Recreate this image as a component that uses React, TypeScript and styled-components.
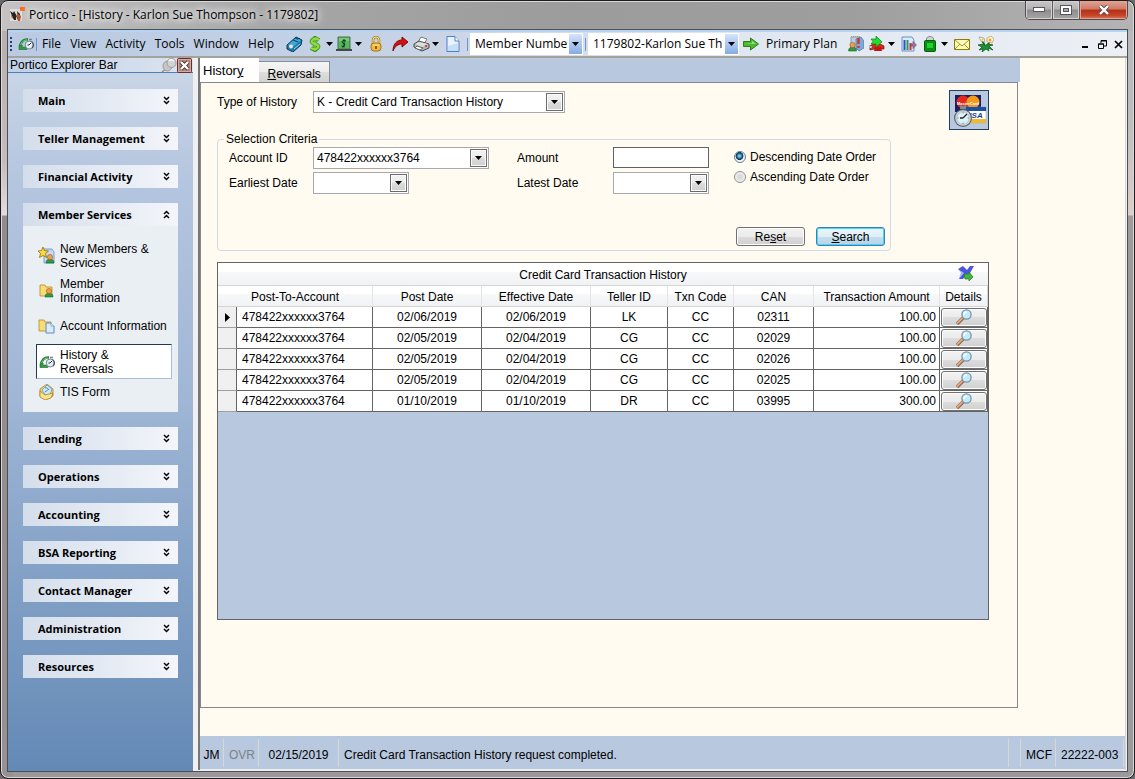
import React from "react";
import styled, { createGlobalStyle, css } from "styled-components";

const sans = '"Liberation Sans", Arial, sans-serif';
const ui = '"Open Sans", "Noto Sans", sans-serif';
const blue = "#b8c8df";
const cream = "#fffbf0";

const GlobalStyle = createGlobalStyle`
  *, *::before, *::after { box-sizing: border-box; }
  body { margin: 0; background: #6d6a6d; font: 12px/14px ${sans}; color: #000; }
  button, input, select { font: inherit; color: inherit; margin: 0; padding: 0; }
  button { border: 0; background: none; }
  svg { display: block; }
`;

/* ---------- window frame ---------- */
const Window = styled.div`
  display: flex;
  flex-direction: column;
  min-height: 100vh;
  padding: 0 6px 6px;
  border: 1px solid #1e1a1e;
  border-radius: 8px;
  box-shadow: inset 0 0 0 1px #d9d9d9;
  background:
    linear-gradient(90deg, #c4c2c2, #a6a6a6 280px, #9c9c9c 50%, #9e9e9e 75%, #b4b4b4) top / 100% 30px no-repeat,
    linear-gradient(#b5abad, #c4bcbc 160px, #e4dcdc 214px, #928a8d 215px, #989093) left / 12px 100% no-repeat,
    linear-gradient(#b8b8b8, #bcbcbc 110px, #dccfc8 214px, #a09a9a 215px, #9a9a9a) right / 12px 100% no-repeat,
    #9c979a;
`;
const TitleBar = styled.header`
  display: flex;
  align-items: flex-start;
  height: 28px;
  padding-left: 2px;
`;
const Title = styled.h1`
  display: flex;
  flex: 1;
  align-items: center;
  gap: 4px;
  height: 28px;
  margin: 0;
  font: 12px/16px ${ui};
  text-shadow: 0 0 6px #fff, 0 0 10px #eee, 0 0 12px #ddd;
`;
const WindowButtons = styled.div`
  display: flex;
  height: 19px;
  border: 1px solid #4f4a4d;
  border-top: 0;
  border-radius: 0 0 5px 5px;
  overflow: hidden;
`;
const WindowButton = styled.button<{ $close?: boolean }>`
  display: grid;
  place-items: center;
  width: ${(p) => (p.$close ? 47 : 27)}px;
  border-right: ${(p) => (p.$close ? "0" : "1px solid #625d60")};
  box-shadow: inset 0 0 0 1px ${(p) => (p.$close ? "#e2a595" : "#d2d0d0")};
  background: ${(p) =>
    p.$close
      ? "linear-gradient(#dfa493, #cf7a66 45%, #b52f17 50%, #c4442a 80%, #e07a55)"
      : "linear-gradient(#c8c8c8, #b2b2b2 45%, #8e8c8d 50%, #a8a5a6)"};
`;
const Client = styled.div`
  display: flex;
  flex: 1;
  flex-direction: column;
  border: 1px solid #4c4f56;
  background: #f0f0f0;
`;

/* ---------- tool bar ---------- */
const Toolbar = styled.div`
  display: flex;
  align-items: center;
  height: 28px;
  padding: 0 2px;
  border-top: 2px solid #b5d4f1;
  border-bottom: 2px solid #a3a29b;
  background: linear-gradient(90deg, #b9cae2, #c6d3e6 35%, #dfe6f0 62%, #ecf0f5);
  font: 12px/16px ${ui};
`;
const Grip = styled.i`
  width: 2px;
  height: 15px;
  margin-right: 6px;
  background: repeating-linear-gradient(#27406f 0 2px, transparent 2px 4px);
`;
const Divider = styled.i`
  width: 1px;
  height: 13px;
  margin: 0 2px;
  background: #6f94c9;
`;
const MenuBar = styled.nav`
  display: flex;
  flex: none;
  justify-content: space-between;
  width: 232px;
  margin: 0 8px 0 3px;
`;
const ToolButton = styled.button`
  display: grid;
  flex: none;
  place-items: center;
  width: 24px;
  height: 22px;
`;
const SplitButton = styled.button`
  display: grid;
  flex: none;
  grid-template-columns: 18px 11px;
  place-items: center;
  height: 22px;
`;
const TextButton = styled.button`
  flex: none;
  width: 81px;
  padding-left: 3px;
  text-align: left;
`;
const MdiButtons = styled.div`
  display: flex;
  gap: 2px;
  margin-left: auto;
`;
const MdiButton = styled.button`
  display: grid;
  place-items: center;
  width: 14px;
  height: 14px;
`;

/* ---------- drop-downs ---------- */
const SelectBox = styled.span<{ $w: number; $tool?: boolean }>`
  position: relative;
  display: block;
  flex: none;
  width: ${(p) => p.$w}px;
  height: 22px;
  border: 1px solid ${(p) => (p.$tool ? "#fff" : "#a8a8ad")};
  background: #fff;
  select {
    width: 100%;
    height: 20px;
    padding: 0 ${(p) => (p.$tool ? 14 : 20)}px 0 ${(p) => (p.$tool ? 4 : 3)}px;
    border: 0;
    border-radius: 0;
    outline: 0;
    appearance: none;
    background: transparent;
  }
  svg {
    position: absolute;
    top: ${(p) => (p.$tool ? 0 : 1)}px;
    right: ${(p) => (p.$tool ? 0 : 1)}px;
    width: ${(p) => (p.$tool ? 13 : 17)}px;
    height: ${(p) => (p.$tool ? 20 : 18)}px;
    pointer-events: none;
    ${(p) =>
      p.$tool
        ? css`background: linear-gradient(#d5e4fa, #86abe4);`
        : css`
            border: 1px solid #6c6c6c;
            box-shadow: inset 0 0 0 1px #fbfbfb;
            background: linear-gradient(#f2f2f2, #ebebeb 50%, #dddddd 50%, #cfcfcf);
          `}
  }
`;

/* ---------- body ---------- */
const Body = styled.div`
  display: flex;
  flex: 1;
`;
const Sidebar = styled.aside`
  display: flex;
  flex: none;
  flex-direction: column;
  width: 185px;
`;
const SidebarTitle = styled.div`
  display: flex;
  align-items: center;
  height: 15px;
  padding: 0 1px 0 2px;
  border-bottom: 1px solid #4d7fb5;
  background: linear-gradient(90deg, #bfd0e7, #dce4f0);
  h2 { flex: 1; margin: 0; font: inherit; }
`;
const SmallButton = styled.button`
  flex: none;
`;
const Groups = styled.div`
  display: flex;
  flex: 1;
  flex-direction: column;
  gap: 15px;
  padding: 16px 15px;
  background: linear-gradient(#c8d5e6, #b4c5df 110px, #9fb6d5 330px, #6389b5);
`;
const GroupHeader = styled.button`
  display: flex;
  align-items: center;
  justify-content: space-between;
  width: 100%;
  height: 23px;
  padding: 0 8px 0 15px;
  background: linear-gradient(90deg, #d4deeb, #f3f5fa);
  font: bold 11px/14px ${ui};
`;
const GroupBody = styled.div`
  padding: 12px 6px 7px 13px;
  background: #eaeff4;
`;
const GroupItem = styled.a<{ $active?: boolean }>`
  display: flex;
  align-items: center;
  gap: 5px;
  min-height: 35px;
  margin-top: ${(p) => (p.$active ? 1 : 0)}px;
  padding-left: ${(p) => (p.$active ? 2 : 1)}px;
  border: 1px solid transparent;
  color: #000;
  text-decoration: none;
  white-space: pre-line;
  svg { flex: none; }
  &:last-child { min-height: 26px; }
  ${(p) =>
    p.$active &&
    css`
      border-color: #1f3a55 #a9bdd9 #a9bdd9 #1f3a55;
      background: #fff;
    `}
`;
const Main = styled.main`
  display: flex;
  flex: 1;
  flex-direction: column;
  min-width: 0;
  margin: 0 1px 1px 5px;
  border: solid #777;
  border-width: 0 1px 0 2px;
  border-right-color: #d8d8d8;
  background: ${cream};
`;
const Tabs = styled.div`
  display: flex;
  align-items: flex-end;
  height: 24px;
  margin-right: 105px;
  background: ${blue};
`;
const Tab = styled.button<{ $active?: boolean }>`
  height: ${(p) => (p.$active ? 24 : 21)}px;
  padding: ${(p) => (p.$active ? "2px 16px 0 3px" : "4px 8px 0")};
  border: 1px solid #8b8d92;
  border-width: ${(p) => (p.$active ? "0" : "1px 1px 0 0")};
  background: ${(p) => (p.$active ? "#fff" : "linear-gradient(#f4f4f4, #ececec 50%, #dedede 50%, #d2d2d2)")};
  font-size: ${(p) => (p.$active ? 13 : 12)}px;
  line-height: 14px;
`;
const Page = styled.section`
  flex: 1;
  margin: 0 107px 28px 0;
  padding: 7px 16px;
  border: 1px solid #85878d;
`;
const Content = styled.div`
  max-width: 772px;
`;
const HistoryRow = styled.div`
  display: flex;
  align-items: flex-start;
  label { width: 96px; padding-top: 5px; }
  ${SelectBox} { margin-top: 1px; }
`;
const CardButton = styled.button`
  width: 40px;
  height: 40px;
  margin-left: auto;
  border: 1px solid #24405f;
  background: ${blue};
`;
const Criteria = styled.fieldset`
  width: 674px;
  max-width: 100%;
  height: 119px;
  margin: 2px 0 0;
  padding: 1px 5px 4px 11px;
  border: 1px solid #d0dbe6;
  border-radius: 4px;
  legend { margin-left: -5px; padding: 0 2px; }
`;
const CriteriaRow = styled.div`
  display: flex;
`;
const Fields = styled.div`
  display: grid;
  grid-template-columns: 84px 204px 96px 121px;
  row-gap: 3px;
  align-items: center;
`;
const AmountInput = styled.input`
  align-self: start;
  width: 96px;
  height: 21px;
  padding: 0 3px;
  border: 1px solid #5e6266;
  background: #fff;
`;
const Radios = styled.div`
  display: flex;
  flex-direction: column;
  label { display: flex; align-items: center; gap: 4px; height: 20px; white-space: nowrap; }
  input {
    width: 12px;
    height: 12px;
    border: 1px solid #8e8f8f;
    border-radius: 50%;
    appearance: none;
    background: radial-gradient(#dadada 30%, #f4f4f4 70%);
  }
  input:checked {
    border-color: #5c7f96;
    background: radial-gradient(circle at 45% 40%, #7cc8ee 10%, #16577f 35%, #0b3350 45%, #f4f4f4 52%);
  }
`;
const Actions = styled.div`
  display: flex;
  justify-content: flex-end;
  gap: 11px;
  margin-top: 33px;
`;
const Button = styled.button<{ $primary?: boolean }>`
  width: 69px;
  height: 19px;
  padding-top: 1px;
  border: 1px solid ${(p) => (p.$primary ? "#3c7fb1" : "#707070")};
  border-radius: 3px;
  box-shadow: inset 0 0 0 1px ${(p) => (p.$primary ? "#45d8fb" : "#fcfcfc")};
  background: ${(p) =>
    p.$primary
      ? "linear-gradient(#eef6fb, #ddeef7 50%, #c6dfed 50%, #b5d3e6)"
      : "linear-gradient(#f2f2f2, #ebebeb 50%, #dddddd 50%, #cfcfcf)"};
`;

/* ---------- data grid ---------- */
const headFill = "linear-gradient(#fff 42%, #f7f8fa 42%, #f1f2f4)";
const DataGrid = styled.div`
  min-height: 358px;
  margin-top: 11px;
  border: 1px solid #646464;
  background: ${blue};
`;
const GridCaption = styled.div`
  position: relative;
  height: 23px;
  padding-top: 5px;
  border-bottom: 1px solid #d5d5d5;
  background: ${headFill};
  text-align: center;
  h2 { margin: 0; font: inherit; }
  button { position: absolute; top: 2px; right: 13px; }
`;
const Table = styled.table`
  width: 100%;
  border-spacing: 0;
  table-layout: fixed;
  th, td {
    height: 21px;
    padding: 0 3px;
    border: solid #646464;
    border-width: 0 1px 1px 0;
    background: #fff;
    font-weight: normal;
    text-align: center;
    white-space: nowrap;
  }
  th { padding: 2px 0 0; border-color: #d5d5d5; background: ${headFill}; }
  th:not(:last-child) { border-right-color: #e4e5e6; }
  td:nth-child(1) { padding: 0; background: #f0f0f0; border-bottom-color: #a0a0a0; }
  td:nth-child(2) { padding-left: 5px; text-align: left; }
  td:nth-child(8) { text-align: right; }
  td:nth-child(9) { padding: 0; }
`;
const Col = styled.col<{ $w: number }>`
  width: ${(p) => p.$w}px;
`;
const DetailButton = styled.button`
  display: grid;
  place-items: center;
  width: 46px;
  height: 19px;
  margin: 0 auto 0 1px;
  border: 1px solid #707070;
  border-radius: 3px;
  box-shadow: inset 0 0 0 1px #fcfcfc;
  background: linear-gradient(#f2f2f2, #ebebeb 50%, #dddddd 50%, #cfcfcf);
`;
const Marker = styled.svg`
  margin: 0 auto;
`;

/* ---------- status bar ---------- */
const StatusBar = styled.footer`
  display: flex;
  height: 34px;
  padding: 3px 1px 2px 0;
  border-bottom: 1px solid #e8ecf2;
  background: ${blue};
`;
const StatusCell = styled.span<{ $w?: number; $muted?: boolean; $center?: boolean }>`
  display: flex;
  flex: ${(p) => (p.$w ? "none" : "1")};
  align-items: center;
  justify-content: ${(p) => (p.$center ? "center" : "flex-start")};
  width: ${(p) => (p.$w ? p.$w + "px" : "auto")};
  padding: ${(p) => (p.$center ? "4px 0 0" : "4px 0 0 5px")};
  border-right: 1px solid #d8d8d4;
  color: ${(p) => (p.$muted ? "#7e8287" : "#000")};
  white-space: nowrap;
`;

/* ---------- icons ---------- */
const Svg = ({ w = 16, h = 16, children }: { w?: number; h?: number; children: React.ReactNode }) => (
  <svg width={w} height={h} viewBox={`0 0 ${w} ${h}`} aria-hidden="true">{children}</svg>
);
const Down = () => (
  <Svg w={7} h={4}><path d="M0 0h7L3.500 4z" fill="#000" /></Svg>
);
const AppIcon = () => (
  <Svg>
    <path d="M1 2h12v12H1z" fill="#dcdcdc" />
    <path d="M1 4l3 2 1-2 4 7-1-7 3 3v6H9L7 9v4H5L3 9z" fill="#2b211e" />
    <path d="M8 6l4 3-1 5H9zM2 8l2 2-1 2z" fill="#b3542b" />
    <path d="M11 0h5v4h-5z" fill="#ff6a1a" />
  </Svg>
);
const HistoryIcon = () => (
  <Svg>
    <path d="M2 9.500C3.500 5 6 3 10 3.500" fill="none" stroke="#1f8434" strokeWidth="2.600" />
    <path d="M2.500 9C4 5.500 6 3.800 9 4" fill="none" stroke="#7ccf7c" />
    <path d="M1 9.500h3.500L3.500 11H9v2.500H1z" fill="#2f9d3f" stroke="#1a6b2b" strokeWidth=".6" />
    <circle cx="11.200" cy="9" r="4" fill="#e6edf3" stroke="#76838f" />
    <path d="M13.500 5.500a4 4 0 0 1 .5 6.500" fill="none" stroke="#4c5863" strokeWidth="1.200" />
    <path d="M11 9l2-2M11 9H9.500" stroke="#27394c" fill="none" />
    <path d="M11 3.500h3" stroke="#76838f" strokeWidth="1.500" />
  </Svg>
);
const TagIcon = () => (
  <Svg w={17}>
    <path d="M1 9L10 1l6 3-1 5-8 7-6-3z" fill="#1d7cab" stroke="#0c3d5c" />
    <path d="M2 9l8-7 5 2-8 7z" fill="#3fa9d6" />
    <path d="M9 1.500l2 1.500 3-.5M7 4l5 2" stroke="#0c3d5c" fill="none" />
    <circle cx="5" cy="10.500" r="2" fill="#f3dff0" />
    <path d="M8 13l6-5" stroke="#8fdcf5" />
  </Svg>
);
const DollarIcon = () => (
  <Svg w={12}>
    <path d="M10 4Q6 1.500 3.500 4T6 8t2.500 4T2 12" fill="none" stroke="#3c8f1c" strokeWidth="4" />
    <path d="M6 0v16" stroke="#3c8f1c" strokeWidth="3" />
    <path d="M6 1v14" stroke="#9be24a" />
    <path d="M10 4Q6 1.500 3.500 4T6 8t2.500 4T2 12" fill="none" stroke="#8edc40" strokeWidth="2.400" />
  </Svg>
);
const CashIcon = () => (
  <Svg>
    <path d="M2 1h12v12H2z" fill="#58b860" stroke="#4f6b54" />
    <path d="M0 13h16v2H0z" fill="#3e4a43" />
    <path d="M3 2h10v3H3z" fill="#74c97a" />
    <path d="M10 5Q6 3.500 6 5.500T8 7.500t0 2.500T6 9.500M8 3v8.500" stroke="#0b3414" fill="none" />
  </Svg>
);
const LockIcon = () => (
  <Svg w={12}>
    <path d="M3 8V4a3 3 0 0 1 6 0v4" fill="none" stroke="#a98024" strokeWidth="2.500" />
    <path d="M3 8V4a3 3 0 0 1 6 0v4" fill="none" stroke="#ffe08a" />
    <rect x="1" y="7" width="10" height="8" rx="3" fill="#f3b93c" stroke="#a87416" />
    <path d="M3 9h6" stroke="#ffe79c" />
    <path d="M6 10v3" stroke="#6a4408" strokeWidth="1.500" />
  </Svg>
);
const RedoIcon = () => (
  <Svg><path d="M1 15C1 8 5 4 10 4V1l6 5-6 5V8C6 8 3 10 1 15z" fill="#d90f0f" stroke="#7d0808" /></Svg>
);
const PrinterIcon = () => (
  <Svg w={17}>
    <path d="M8 1l6 2-3 5-6-2z" fill="#fff" stroke="#777" />
    <path d="M1 8l5-3 10 3v4l-7 3-8-4z" fill="#b4b4b4" stroke="#4b4b4b" />
    <path d="M2 8l4-2 9 2-6 3z" fill="#dedede" />
    <path d="M4 10l6 2-3 2-5-2z" fill="#fff" stroke="#666" />
    <circle cx="13" cy="10" r="1" fill="#d22" />
  </Svg>
);
const DocIcon = () => (
  <Svg w={14}>
    <path d="M1 .5h8L13 5v10.500H1z" fill="#e8f3ff" stroke="#4e7fc4" />
    <path d="M2 10l10-3v8H2z" fill="#c6def8" />
    <path d="M9 .5V5h4" fill="#fff" stroke="#4e7fc4" />
  </Svg>
);
const GoIcon = () => (
  <Svg><path d="M.5 5.500h7V2l8 6-8 6v-3.500h-7z" fill="#4cba2e" stroke="#2c7f1c" /><path d="M2 7h7V5l4 3z" fill="#a5e884" /></Svg>
);
const Person = ({ x, y }: { x: number; y: number }) => (
  <g transform={`translate(${x} ${y})`}>
    <path d="M0 9c0-3 2-4 4-4s4 1 4 4z" fill="#2f9a3c" stroke="#17652a" strokeWidth=".6" />
    <circle cx="4" cy="3" r="2.600" fill="#f0a04c" stroke="#9a5a1e" strokeWidth=".6" />
  </g>
);
const PeopleIcon = () => (
  <Svg>
    <path d="M3 1h9v12H3z" fill="#b9cfe9" stroke="#7f9cc2" />
    <path d="M3 .5h9" stroke="#c9a13d" strokeDasharray="1 1" />
    <path d="M8 3l5-2 3 4v7l-5 3-3-3z" fill="#7fa8d9" stroke="#3d6da6" strokeWidth=".6" />
    <path d="M10.500 2v6M10.500 10v2" stroke="#d8342a" strokeWidth="2.400" />
    <Person x={0.5} y={6} />
  </Svg>
);
const PhoneIcon = () => (
  <Svg>
    <path d="M1 10c3-3 10-3 14 0v3H5l-4 1z" fill="#e4221b" stroke="#7d0e0a" strokeWidth=".7" />
    <path d="M6 11h6l1 4H5z" fill="#c41410" />
    <path d="M0 10h3v2H0zM2 13h3" fill="#fff" stroke="#666" strokeWidth=".6" />
    <path d="M2 3h5V0l6 6-6 5V8H2L4 5.500z" fill="#22dd2c" stroke="#128018" strokeWidth=".7" />
  </Svg>
);
const ChartIcon = () => (
  <Svg>
    <path d="M1 1h10l2 3v11H1z" fill="#dbe9fa" stroke="#6c8fc4" />
    <path d="M2.500 4h2v10h-2z" fill="#2a52c8" /><path d="M5.500 4h2v10h-2z" fill="#2b9b4a" /><path d="M8.500 7h2v7h-2z" fill="#cf3030" />
    <path d="M10 8h2V5.500L15.500 9 12 12.500V10h-2z" fill="#b5707f" stroke="#4d4b8a" strokeWidth=".6" />
  </Svg>
);
const BagIcon = () => (
  <Svg w={12}>
    <path d="M2.500 5V2L5 .5h2L9.500 2v3z" fill="#cfd3d0" stroke="#8c938e" />
    <rect x=".5" y="4.500" width="11" height="11" rx="1" fill="#0a8f14" stroke="#07600d" />
    <path d="M3 7h6v5H3z" fill="#1fd22c" />
  </Svg>
);
const MailIcon = () => (
  <Svg>
    <path d="M.5 3.500h15v10H.5z" fill="#fffbc0" stroke="#8a7d00" />
    <path d="M1 4l7 6 7-6M1 13l5-5M15 13l-5-5" fill="none" stroke="#a89a14" />
  </Svg>
);
const FlowerIcon = () => (
  <Svg>
    <path d="M4 5l3 4M12 6l-4 4" stroke="#11611f" strokeWidth="1.500" />
    <path d="M0 9l5-1 2 2 3-2 5 1-4 1 4 4-5-2 1 3-3-2-4 3 1-3-4 1 3-3z" fill="#1f9131" stroke="#11611f" strokeWidth=".8" />
    <path d="M1 1l5 1 1 4-4-1z" fill="#fff6e2" stroke="#8f9a7a" strokeWidth=".7" />
    <path d="M9 2l4-2 3 3-2 4-5-1z" fill="#fff1d0" stroke="#a88b4c" strokeWidth=".6" />
    <circle cx="12" cy="4" r="1.500" fill="#f3a033" /><circle cx="4.500" cy="3.500" r="1" fill="#f2bd32" />
  </Svg>
);
const PinIcon = () => (
  <Svg>
    <path d="M1 15l5-4" stroke="#8b8b8b" strokeWidth="1.500" />
    <ellipse cx="6.500" cy="9" rx="4.500" ry="5" fill="#c6c6c6" stroke="#9d9d9d" />
    <circle cx="10.500" cy="6" r="4.500" fill="#d2d2d2" stroke="#9d9d9d" />
    <path d="M8 4c2-2 4-1 5 0" stroke="#fff" fill="none" strokeWidth="1.500" />
  </Svg>
);
const CloseIcon = () => (
  <Svg w={15} h={15}>
    <rect x=".5" y=".5" width="14" height="14" rx="1" fill="#ad8781" stroke="#702d28" />
    <path d="M1.500 1.500h12v12h-12z" fill="none" stroke="#d2aaa4" />
    <path d="M4 4l7 7M11 4l-7 7" stroke="#4a3432" strokeWidth="4" />
    <path d="M4 4l7 7M11 4l-7 7" stroke="#fff" strokeWidth="2.400" />
  </Svg>
);
const Chevrons = ({ up }: { up?: boolean }) => (
  <Svg w={7} h={9}>
    <path d={up ? "M1 4l2.500-2.500L6 4M1 8l2.500-2.500L6 8" : "M1 1l2.500 2.500L6 1M1 5l2.500 2.500L6 5"} fill="none" stroke="#000" strokeWidth="1.500" />
  </Svg>
);
const Folder = () => (
  <path d="M1 2h5l1 2h6v9H1z" fill="#f8dc76" stroke="#b58a1e" strokeWidth=".8" />
);
const NewMemberIcon = () => (
  <Svg w={17} h={17}>
    <path d="M6 2h8l2 3v11H6z" fill="#c4daf4" stroke="#7d9fcb" />
    <g transform="translate(1 0)"><Person x={7} y={7} /></g>
    <path d="M5 0l1.500 3.500 4 .5-3 2.500 1 4L5 8.500 1.500 10.500l1-4-2.500-2.500 3.500-.5z" fill="#ffd83c" stroke="#8c6a10" strokeWidth=".8" />
  </Svg>
);
const MemberInfoIcon = () => (
  <Svg w={17}><g transform="translate(1 0)"><Folder /></g><Person x={7} y={5} /></Svg>
);
const AccountIcon = () => (
  <Svg w={17}><Folder /><path d="M8 5h5l3 3v7H8z" fill="#d9ebfd" stroke="#5b8ac6" /><path d="M13 5v3h3" fill="#fff" stroke="#5b8ac6" strokeWidth=".7" /></Svg>
);
const TisIcon = () => (
  <Svg w={17}>
    <path d="M2 5l7-5 6 5v7l-6 3-7-3z" fill="#f6d870" stroke="#a98020" strokeWidth=".8" />
    <path d="M4 6l5-5 5 4-2 6-4 1z" fill="#cfe8fa" stroke="#6d93bf" strokeWidth=".8" />
    <path d="M7 4c2-1 3 1 4 2M7 8l4-3" stroke="#3f8fc8" fill="none" />
    <path d="M2 7l5 4 8-2-2 5-6 2-5-3z" fill="#fbe48c" stroke="#a98020" strokeWidth=".8" />
  </Svg>
);
const CardIcon = () => (
  <Svg w={38} h={38}>
    <rect x="5" y="4" width="26" height="17" fill="#1b1d5c" />
    <circle cx="13" cy="11" r="6.500" fill="#e3281c" />
    <circle cx="23" cy="11" r="6.500" fill="#f39a1c" />
    <text x="7" y="14" fontSize="4" fontWeight="bold" fill="#fff" fontFamily="Liberation Sans, sans-serif">MasterCard</text>
    <rect x="12" y="16" width="24" height="16" fill="#fff" stroke="#9aa" strokeWidth=".5" />
    <path d="M12 16h24v4H12z" fill="#1d4f9e" /><path d="M12 28h24v4H12z" fill="#f2b82e" />
    <text x="14" y="27" fontSize="8" fontWeight="bold" fontStyle="italic" fill="#1d3f8e" fontFamily="Liberation Sans, sans-serif">VISA</text>
    <path d="M10 14l3 1 3-1v4h-6z" fill="#888" />
    <circle cx="13" cy="27" r="9" fill="#59646f" />
    <circle cx="13" cy="27" r="7.800" fill="#d5dce2" />
    <circle cx="13" cy="27" r="6.300" fill="#d9f3fc" stroke="#8fa3b0" strokeWidth=".6" />
    <path d="M13 27l4-4M13 27h-3" stroke="#222" strokeWidth="1.300" />
    <path d="M13 21v1.500M13 31.500V33M7 27h1.500M17.500 27H19" stroke="#e07b3a" />
  </Svg>
);
const ExportIcon = () => (
  <Svg w={18}>
    <path d="M1 4l5-3 4 4 3-4h4l-4 7-4 2-3 4H2l3-6z" fill="#4b55e0" />
    <path d="M1 4l3 3-2 7 5-6z" fill="#a9b3f3" />
    <path d="M7 9h5V7l4 5-4 4v-2H8z" fill="#3fb53a" stroke="#1d7d22" strokeWidth=".7" />
  </Svg>
);
const LensIcon = () => (
  <Svg w={16} h={16}>
    <path d="M1 15l6-6" stroke="#7b6a66" strokeWidth="3.500" />
    <path d="M1 14.500l5.500-5.500" stroke="#f2a46a" strokeWidth="1.800" />
    <circle cx="10.500" cy="5.500" r="4.600" fill="#c3ebfb" stroke="#7792ab" strokeWidth="1.300" />
    <path d="M8 6c0-2 1-3 3-3" stroke="#fff" strokeWidth="1.500" fill="none" />
  </Svg>
);

/* ---------- parts ---------- */
type DropProps = { id: string; w: number; value?: string; tool?: boolean; label?: string };
const Drop = ({ id, w, value = "", tool, label }: DropProps) => (
  <SelectBox $w={w} $tool={tool}>
    <select id={id} aria-label={label}><option>{value}</option></select>
    <svg viewBox={tool ? "0 0 13 20" : "0 0 15 16"} aria-hidden="true">
      <path d={tool ? "M3 8h7l-3.500 4z" : "M4 6h7l-3.500 4z"} fill="#000" />
    </svg>
  </SelectBox>
);

const menus = ["File", "View", "Activity", "Tools", "Window", "Help"];
const services = [
  { text: "New Members &\nServices", icon: <NewMemberIcon /> },
  { text: "Member\nInformation", icon: <MemberInfoIcon /> },
  { text: "Account Information", icon: <AccountIcon /> },
  { text: "History &\nReversals", icon: <HistoryIcon />, active: true },
  { text: "TIS Form", icon: <TisIcon /> },
];
const groups = [
  "Main", "Teller Management", "Financial Activity", "Member Services", "Lending", "Operations",
  "Accounting", "BSA Reporting", "Contact Manager", "Administration", "Resources",
];
const columns = [
  { name: "Post-To-Account", w: 136 }, { name: "Post Date", w: 109 }, { name: "Effective Date", w: 109 },
  { name: "Teller ID", w: 77 }, { name: "Txn Code", w: 66 }, { name: "CAN", w: 80 },
  { name: "Transaction Amount", w: 126 }, { name: "Details", w: 48 },
];
const account = "478422xxxxxx3764";
const rows = [
  [account, "02/06/2019", "02/06/2019", "LK", "CC", "02311", "100.00"],
  [account, "02/05/2019", "02/04/2019", "CG", "CC", "02029", "100.00"],
  [account, "02/05/2019", "02/04/2019", "CG", "CC", "02026", "100.00"],
  [account, "02/05/2019", "02/04/2019", "CG", "CC", "02025", "100.00"],
  [account, "01/10/2019", "01/10/2019", "DR", "CC", "03995", "300.00"],
];

export default function App() {
  return (
    <>
      <GlobalStyle />
      <Window>
        <TitleBar>
          <Title><AppIcon />Portico - [History - Karlon Sue Thompson - 1179802]</Title>
          <WindowButtons>
            <WindowButton aria-label="Minimize">
              <Svg w={12} h={6}><rect x=".5" y=".5" width="11" height="4" fill="#fff" stroke="#55555e" /></Svg>
            </WindowButton>
            <WindowButton aria-label="Maximize">
              <Svg w={12} h={10}>
                <rect x=".5" y=".5" width="11" height="9" fill="#fff" stroke="#55555e" />
                <rect x="3.500" y="3.500" width="5" height="3" fill="#aaa" stroke="#55555e" />
              </Svg>
            </WindowButton>
            <WindowButton $close aria-label="Close">
              <Svg w={12} h={10}>
                <path d="M2 1l8 8M10 1L2 9" stroke="#5a4a50" strokeWidth="4" />
                <path d="M2 1l8 8M10 1L2 9" stroke="#fff" strokeWidth="2.400" />
              </Svg>
            </WindowButton>
          </WindowButtons>
        </TitleBar>
        <Client>
          <Toolbar>
            <Grip />
            <HistoryIcon />
            <Divider />
            <MenuBar>{menus.map((m) => <button key={m}>{m}</button>)}</MenuBar>
            <ToolButton aria-label="Tag"><TagIcon /></ToolButton>
            <SplitButton aria-label="Money"><DollarIcon /><Down /></SplitButton>
            <SplitButton aria-label="Cash"><CashIcon /><Down /></SplitButton>
            <ToolButton aria-label="Lock"><LockIcon /></ToolButton>
            <ToolButton aria-label="Forward"><RedoIcon /></ToolButton>
            <SplitButton aria-label="Print"><PrinterIcon /><Down /></SplitButton>
            <ToolButton aria-label="New"><DocIcon /></ToolButton>
            <Divider />
            <Drop id="lookup" label="Look up by" tool w={113} value="Member Numbe" />
            <Divider />
            <Drop id="member" label="Member" tool w={151} value="1179802-Karlon Sue Th" />
            <ToolButton aria-label="Go"><GoIcon /></ToolButton>
            <TextButton>Primary Plan</TextButton>
            <ToolButton aria-label="People"><PeopleIcon /></ToolButton>
            <SplitButton aria-label="Call"><PhoneIcon /><Down /></SplitButton>
            <ToolButton aria-label="Chart"><ChartIcon /></ToolButton>
            <SplitButton aria-label="Bag"><BagIcon /><Down /></SplitButton>
            <ToolButton aria-label="Mail"><MailIcon /></ToolButton>
            <ToolButton aria-label="Flowers"><FlowerIcon /></ToolButton>
            <MdiButtons>
              <MdiButton aria-label="Minimize page"><Svg w={9} h={9}><path d="M0 6h6v2H0z" /></Svg></MdiButton>
              <MdiButton aria-label="Restore page">
                <Svg w={9} h={9}><path d="M3 3V.5h5.500V6H6M3 1h6M.5 4h5v4.500h-5zM0 4h6" fill="none" stroke="#000" /></Svg>
              </MdiButton>
              <MdiButton aria-label="Close page"><Svg w={9} h={9}><path d="M1 1l7 7M8 1L1 8" stroke="#000" strokeWidth="1.700" /></Svg></MdiButton>
            </MdiButtons>
          </Toolbar>
          <Body>
            <Sidebar>
              <SidebarTitle>
                <h2>Portico Explorer Bar</h2>
                <SmallButton aria-label="Pin"><PinIcon /></SmallButton>
                <SmallButton aria-label="Close bar"><CloseIcon /></SmallButton>
              </SidebarTitle>
              <Groups>
                {groups.map((g) => {
                  const open = g === "Member Services";
                  return (
                    <div key={g}>
                      <GroupHeader aria-expanded={open}>{g}<Chevrons up={open} /></GroupHeader>
                      {open && (
                        <GroupBody>
                          {services.map((s) => (
                            <GroupItem key={s.text} href="#" $active={s.active}>{s.icon}<span>{s.text}</span></GroupItem>
                          ))}
                        </GroupBody>
                      )}
                    </div>
                  );
                })}
              </Groups>
            </Sidebar>
            <Main>
              <Tabs role="tablist">
                <Tab role="tab" aria-selected $active>Histor<u>y</u></Tab>
                <Tab role="tab" aria-selected={false}><u>R</u>eversals</Tab>
              </Tabs>
              <Page>
                <Content>
                  <HistoryRow>
                    <label htmlFor="type">Type of History</label>
                    <Drop id="type" w={252} value="K - Credit Card Transaction History" />
                    <CardButton aria-label="Card history"><CardIcon /></CardButton>
                  </HistoryRow>
                  <Criteria>
                    <legend>Selection Criteria</legend>
                    <CriteriaRow>
                      <Fields>
                        <label htmlFor="account">Account ID</label>
                        <Drop id="account" w={176} value={account} />
                        <label htmlFor="amount">Amount</label>
                        <AmountInput id="amount" />
                        <label htmlFor="from">Earliest Date</label>
                        <Drop id="from" w={96} />
                        <label htmlFor="to">Latest Date</label>
                        <Drop id="to" w={96} />
                      </Fields>
                      <Radios>
                        <label><input type="radio" name="order" defaultChecked />Descending Date Order</label>
                        <label><input type="radio" name="order" />Ascending Date Order</label>
                      </Radios>
                    </CriteriaRow>
                    <Actions>
                      <Button>Re<u>s</u>et</Button>
                      <Button $primary><u>S</u>earch</Button>
                    </Actions>
                  </Criteria>
                  <DataGrid>
                    <GridCaption>
                      <h2 id="grid-title">Credit Card Transaction History</h2>
                      <button aria-label="Export"><ExportIcon /></button>
                    </GridCaption>
                    <Table aria-labelledby="grid-title">
                      <colgroup>
                        <Col $w={19} />
                        {columns.map((c) => <Col key={c.name} $w={c.w} />)}
                      </colgroup>
                      <thead>
                        <tr>{columns.map((c, i) => <th key={c.name} colSpan={i === 0 ? 2 : 1}>{c.name}</th>)}</tr>
                      </thead>
                      <tbody>
                        {rows.map((r, i) => (
                          <tr key={i}>
                            <td>{i === 0 && <Marker width="5" height="9" viewBox="0 0 5 9"><path d="M0 0l5 4.500L0 9z" /></Marker>}</td>
                            {r.map((v, j) => <td key={j}>{v}</td>)}
                            <td><DetailButton aria-label="Details"><LensIcon /></DetailButton></td>
                          </tr>
                        ))}
                      </tbody>
                    </Table>
                  </DataGrid>
                </Content>
              </Page>
              <StatusBar>
                <StatusCell $w={24} $center>JM</StatusCell>
                <StatusCell $w={35} $muted>OVR</StatusCell>
                <StatusCell $w={80} $center>02/15/2019</StatusCell>
                <StatusCell>Credit Card Transaction History request completed.</StatusCell>
                <StatusCell $w={12} />
                <StatusCell $w={35}>MCF</StatusCell>
                <StatusCell $w={68}>22222-003</StatusCell>
              </StatusBar>
            </Main>
          </Body>
        </Client>
      </Window>
    </>
  );
}
